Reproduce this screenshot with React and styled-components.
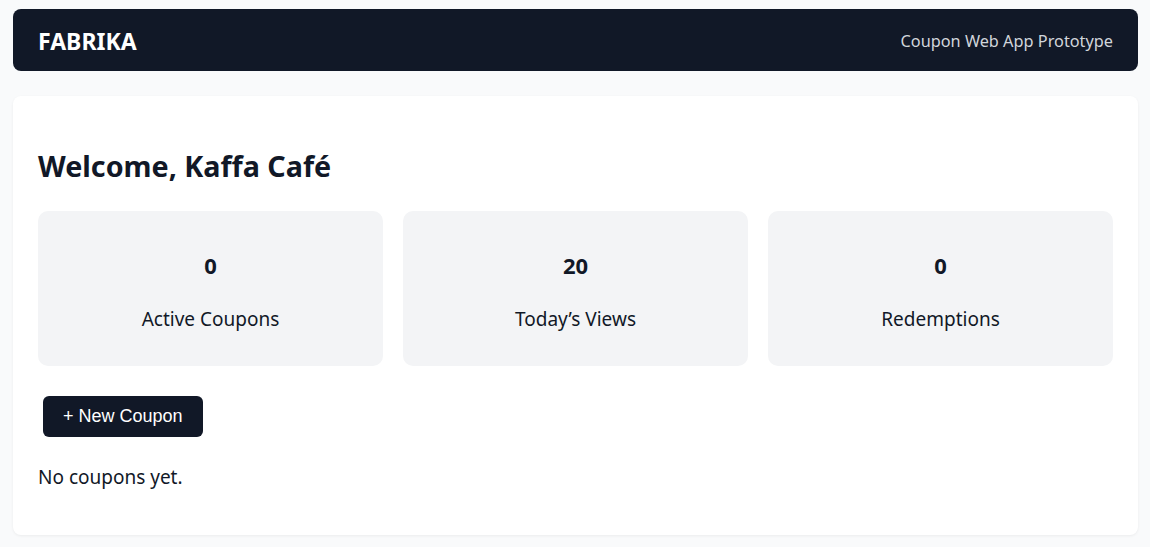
import React from "react";
import styled, { createGlobalStyle } from "styled-components";

const GlobalStyle = createGlobalStyle`
  html, body {
    margin: 0;
    padding: 0;
    background: #f9fafb;
    font-family: "Noto Sans", "Open Sans", sans-serif;
    color: #111827;
  }
`;

const stats = [
  { value: 0, label: "Active Coupons" },
  { value: 20, label: "Today’s Views" },
  { value: 0, label: "Redemptions" },
];

export default function App() {
  return (
    <>
      <GlobalStyle />
      <Page>
        <Header>
          <Brand>FABRIKA</Brand>
          <Tagline>Coupon Web App Prototype</Tagline>
        </Header>
        <Main>
          <Welcome>Welcome, Kaffa Café</Welcome>
          <StatsGrid>
            {stats.map((s) => (
              <StatCard key={s.label}>
                <StatValue>{s.value}</StatValue>
                <StatLabel>{s.label}</StatLabel>
              </StatCard>
            ))}
          </StatsGrid>
          <NewButton>+ New Coupon</NewButton>
          <Empty>No coupons yet.</Empty>
        </Main>
      </Page>
    </>
  );
}

const Page = styled.div`
  padding: 9px 12px 13px 13px;
  display: flex;
  flex-direction: column;
  gap: 25px;
`;

const Header = styled.header`
  height: 62px;
  box-sizing: border-box;
  padding: 1px 25px 0;
  background: #111827;
  border-radius: 8px;
  display: flex;
  align-items: center;
  justify-content: space-between;
`;

const Brand = styled.div`
  color: #ffffff;
  font-size: 23px;
  font-weight: 700;
`;

const Tagline = styled.div`
  color: #d1d5db;
  font-size: 16.3px;
`;

const Main = styled.main`
  background: #ffffff;
  border-radius: 8px;
  box-shadow: 0 1px 3px rgba(0, 0, 0, 0.06);
  padding: 50px 25px 44px;
  display: flex;
  flex-direction: column;
  align-items: flex-start;
`;

const Welcome = styled.h2`
  margin: 0 0 25px;
  font-size: 28.7px;
  font-weight: 700;
  line-height: 40px;
`;

const StatsGrid = styled.div`
  align-self: stretch;
  display: grid;
  grid-template-columns: repeat(3, 1fr);
  gap: 20px;
`;

const StatCard = styled.div`
  height: 155px;
  box-sizing: border-box;
  padding-top: 39px;
  background: #f3f4f6;
  border-radius: 10px;
  display: flex;
  flex-direction: column;
  align-items: center;
  gap: 26px;
`;

const StatValue = styled.div`
  font-size: 22px;
  font-weight: 700;
  line-height: 30px;
`;

const StatLabel = styled.div`
  font-size: 19px;
  line-height: 26px;
`;

const NewButton = styled.button`
  margin: 30px 0 0 5px;
  height: 41px;
  padding: 0 20px;
  border: none;
  border-radius: 6px;
  background: #111827;
  color: #ffffff;
  font-family: "Liberation Sans", Arial, sans-serif;
  font-size: 18px;
  cursor: pointer;
`;

const Empty = styled.p`
  margin: 26px 0 0;
  font-size: 19px;
  line-height: 28px;
`;
